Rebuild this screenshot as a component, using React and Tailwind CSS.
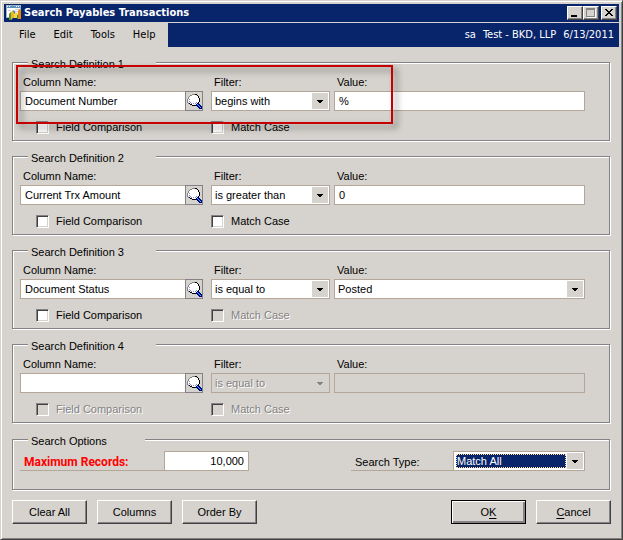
import React from "react";
import clsx from "clsx";

const EMBOSSED = "text-[#848284] [text-shadow:1px_1px_0_#fff]";

function AppIcon() {
  return (
    <svg width="16" height="16" viewBox="0 0 16 16" aria-hidden="true" className="shrink-0">
      <rect x="0" y="0" width="15" height="13" fill="#9db4cc" />
      <rect x="1" y="1" width="13" height="2" fill="#5b8fc0" />
      <path d="M1 1h1v1H1zM3 1h1v1H3zM10 1h1v1h-1zM12 1h1v1h-1z" fill="#fff" />
      <rect x="1" y="3" width="13" height="9" fill="#fff" />
      <path d="M9 4h4v1H9zM9 6h4v1H9zM2 5h3v1H2z" fill="#c3d4e6" />
      <path d="M3 15V9l2-2v8z" fill="#4b9a2f" />
      <path d="M5 15V7l2-2 2 3v2l-2 3z" fill="#f4b61c" />
      <path d="M7 6l1-1 2 4-1 1z" fill="#2c7fd0" />
      <path d="M8 13V9l2-2 2 2v4z" fill="#f7d64c" />
      <path d="M12 14V6l1-2 2 1v9z" fill="#e8851c" />
      <path d="M11 10h1v4h-1z" fill="#3f8f2f" />
    </svg>
  );
}

function Magnifier() {
  return (
    <svg width="16" height="16" viewBox="0 -1 16 16" shapeRendering="crispEdges" aria-hidden="true" className="shrink-0">
      <circle cx="7.5" cy="6" r="5.5" fill="#fff" />
      <path
        d="M6 0h4v1H6zM4 1h2v1H4zM3 2h1v1H3zM2 3h1v2H2zM1 5h1v4H1zM2 9h1v1H2z"
        fill="#848284"
      />
      <path
        d="M9 0h2v1H9zM11 1h1v1h-1zM12 2h1v2h-1zM13 4h1v4h-1zM12 8h1v2h-1zM10 10h2v1h-2zM6 11h4v1H6zM4 10h2v1H4zM3 9h1v1H3z"
        fill="#000"
      />
      <path d="M3 5h1v1H3zM3 7h1v1H3zM4 8h1v1H4zM5 9h1v1H5zM7 9h1v1H7zM9 9h1v1H9zM10 8h1v1h-1z" fill="#8486d6" />
      <path d="M11 9h2v1h1v1h1v1h1v3h-3v-1h-1v-1h-1v-1h-1v-2h1z" fill="#000084" />
      <path d="M11 10h1v1h1v1h1v1h1v1h-1v-1h-1v-1h-1v-1h-1z" fill="#21c7ef" />
    </svg>
  );
}

function Arrow({ disabled }) {
  return (
    <svg width="6" height="3" viewBox="0 0 6 3" shapeRendering="crispEdges" aria-hidden="true">
      <path d="M0 0h6v1H5v1H4v1H2V2H1V1H0z" fill={disabled ? "#848284" : "#000"} />
    </svg>
  );
}

function Combo({ id, value, disabled, focused, className }) {
  return (
    <div
      className={clsx(
        "relative flex h-5 border border-[#b5a69a] p-px",
        disabled ? "bg-[#d6d3ce]" : "bg-white",
        className,
      )}
    >
      <select
        id={id}
        defaultValue={value}
        disabled={disabled}
        className={clsx(
          "min-w-0 flex-1 appearance-none rounded-none opacity-100",
          disabled && EMBOSSED,
          focused
            ? "m-px mr-[17px] bg-[#08246b] pl-px leading-[14px] text-white outline-1 -outline-offset-1 outline-[#ffdb94] outline-dotted"
            : "pr-4 pl-0.5 leading-4 outline-none",
        )}
      >
        <option>{value}</option>
      </select>
      <span
        className={clsx(
          "pointer-events-none absolute top-px right-px bottom-px flex w-4 items-center justify-center",
          !disabled && "bg-[#d6d3ce]",
        )}
      >
        <Arrow disabled={disabled} />
      </span>
    </div>
  );
}

function Tick({ id, label, disabled, className }) {
  return (
    <div className={clsx("flex items-center gap-[7px]", className)}>
      <input
        id={id}
        type="checkbox"
        disabled={disabled}
        className={clsx(
          "size-[13px] shrink-0 appearance-none border border-t-[#848284] border-r-white border-b-white border-l-[#848284] shadow-[inset_1px_1px_0_#424142,inset_-1px_-1px_0_#d6d3ce]",
          disabled ? "bg-[#d6d3ce]" : "bg-white",
        )}
      />
      <label htmlFor={id} className={clsx("leading-[13px]", disabled && EMBOSSED)}>
        {label}
      </label>
    </div>
  );
}

function Group({ title, narrow, className, children }) {
  return (
    <fieldset
      className={clsx(
        "min-w-0 border border-[#848284] px-[7px] shadow-[inset_1px_1px_0_#fff,1px_1px_0_#fff]",
        className,
      )}
    >
      <legend
        className={clsx(
          "ml-2 h-[15px] bg-[#d6d3ce] pt-1 pl-[3px] leading-[11px]",
          narrow ? "w-[117px]" : "w-32",
        )}
      >
        {title}
      </legend>
      {children}
    </fieldset>
  );
}

const DEFINITIONS = [
  { n: 1, column: "Document Number", filter: "begins with", value: "%" },
  { n: 2, column: "Current Trx Amount", filter: "is greater than", value: "0" },
  { n: 3, column: "Document Status", filter: "is equal to", value: "Posted", list: true, noCase: true },
  { n: 4, column: "", filter: "is equal to", value: "", empty: true, noCase: true },
];

function Definition({ n, column, filter, value, list, noCase, empty }) {
  return (
    <Group title={`Search Definition ${n}`} className="h-[86px]">
      <div className="mt-[3px] flex pr-[17px]">
        <div className="w-[183px]">
          <label htmlFor={`column${n}`} className="block h-[18px] pl-[3px] leading-[18px]">
            Column Name:
          </label>
          <div className="flex h-5">
            <input
              id={`column${n}`}
              defaultValue={column}
              className="min-w-0 flex-1 border border-r-0 border-[#b5a69a] bg-white pl-1 outline-none"
            />
            <button
              type="button"
              aria-label="Look up"
              className="flex w-[18px] items-center justify-center border border-[#848284]"
            >
              <Magnifier />
            </button>
          </div>
        </div>
        <div className="ml-2 w-[119px]">
          <label htmlFor={`filter${n}`} className="block h-[18px] pl-[3px] leading-[18px]">
            Filter:
          </label>
          <Combo id={`filter${n}`} value={filter} disabled={empty} />
        </div>
        <div className="ml-1 min-w-0 flex-1">
          <label htmlFor={`value${n}`} className="block h-[18px] pl-[3px] leading-[18px]">
            Value:
          </label>
          {list ? (
            <Combo id={`value${n}`} value={value} />
          ) : (
            <input
              id={`value${n}`}
              defaultValue={value}
              disabled={empty}
              className={clsx(
                "block h-5 w-full border border-[#b5a69a] pl-1 outline-none",
                empty ? "bg-[#d6d3ce]" : "bg-white",
              )}
            />
          )}
        </div>
      </div>
      <div className="mt-[10px] flex pl-4">
        <Tick id={`compare${n}`} label="Field Comparison" disabled={empty} className="w-[175px]" />
        <Tick id={`case${n}`} label="Match Case" disabled={noCase} />
      </div>
    </Group>
  );
}

function PushButton({ primary, children }) {
  return (
    <button
      type={primary ? "submit" : "button"}
      className={clsx(
        "h-6 w-[75px] border",
        primary
          ? "border-black shadow-[inset_1px_1px_0_#fff,inset_-1px_-1px_0_#848284,inset_-2px_-2px_0_#848284]"
          : "border-t-white border-r-[#424142] border-b-[#424142] border-l-white shadow-[inset_-1px_-1px_0_#848284]",
      )}
    >
      {children}
    </button>
  );
}

function CaptionButton({ label, children, className }) {
  return (
    <button
      type="button"
      aria-label={label}
      className={clsx(
        "flex h-[14px] w-4 items-center justify-center border border-t-white border-r-[#424142] border-b-[#424142] border-l-white bg-[#d6d3ce] shadow-[inset_-1px_-1px_0_#848284]",
        className,
      )}
    >
      <svg width="12" height="12" viewBox="0 0 12 12" shapeRendering="crispEdges" aria-hidden="true">
        {children}
      </svg>
    </button>
  );
}

export default function App() {
  return (
    <div className="border border-t-[#d6d3ce] border-r-[#424142] border-b-[#424142] border-l-[#d6d3ce] bg-[#d6d3ce] p-[3px] font-['Liberation_Sans',sans-serif] text-[11px] text-black shadow-[inset_1px_1px_0_#fff,inset_-1px_-1px_0_#848284]">
      <header className="font-['DejaVu_Sans_Condensed','DejaVu_Sans',sans-serif]">
        <div className="flex h-[18px] items-center bg-[#08246b] pr-0.5 pl-0.5 text-white">
          <AppIcon />
          <h1 className="ml-0.5 flex-1 font-bold whitespace-nowrap">Search Payables Transactions</h1>
          <CaptionButton label="Minimize">
            <path d="M2 8h6v2H2z" fill="#000" />
          </CaptionButton>
          <CaptionButton label="Maximize">
            <path d="M1 1h9v9H1zM2 3v6h7V3z" fillRule="evenodd" fill="#848284" />
            <path d="M10 2h1v9H2v-1h8z" fill="#fff" />
          </CaptionButton>
          <CaptionButton label="Close" className="ml-0.5">
            <path
              d="M2 2h2v1h1v1h2V3h1V2h2v1H9v1H8v1H7v1h1v1h1v1h1v1H8V8H7V7H5v1H4v1H2V8h1V7h1V6h1V5H4V4H3V3H2z"
              fill="#000"
            />
          </CaptionButton>
        </div>
        <div className="mt-px flex h-6 items-center bg-[#08246b]">
          <nav className="flex h-full w-[164px] items-center gap-[18px] bg-[#d6d3ce] pl-[15px]">
            <button type="button">File</button>
            <button type="button">Edit</button>
            <button type="button">Tools</button>
            <button type="button">Help</button>
          </nav>
          <p className="flex flex-1 justify-end gap-[7px] pr-[5px] whitespace-nowrap text-white">
            <span>sa</span>
            <span>Test - BKD, LLP</span>
            <span>6/13/2011</span>
          </p>
        </div>
      </header>

      <form className="relative px-2 pt-2 pb-3" onSubmit={(e) => e.preventDefault()}>
        <div className="flex flex-col gap-2 pr-px">
          {DEFINITIONS.map((d) => (
            <Definition key={d.n} {...d} />
          ))}
          <Group title="Search Options" narrow className="mt-px h-[58px]">
            <div className="mt-1 flex h-5 pr-[17px]">
              <label
                htmlFor="maximum"
                className="w-36 border-b border-[#b5a69a] pl-1 font-[Roboto,sans-serif] text-xs leading-[22px] font-bold text-[#ff0000]"
              >
                Maximum Records:
              </label>
              <input
                id="maximum"
                defaultValue="10,000"
                className="w-[85px] border border-[#b5a69a] bg-white pr-1 text-right outline-none"
              />
              <label
                htmlFor="searchType"
                className="ml-auto w-[102px] border-b border-[#b5a69a] pl-1 leading-[22px]"
              >
                Search Type:
              </label>
              <Combo id="searchType" value="Match All" focused className="w-[132px]" />
            </div>
          </Group>
        </div>
        <div className="mt-[10px] flex gap-[10px]">
          <PushButton>Clear All</PushButton>
          <PushButton>Columns</PushButton>
          <PushButton>Order By</PushButton>
          <span className="flex-1" />
          <PushButton primary>
            O<u className="underline-offset-2">K</u>
          </PushButton>
          <PushButton>
            <u className="underline-offset-2">C</u>ancel
          </PushButton>
        </div>

        <div className="pointer-events-none absolute top-[18px] left-3 h-[59px] w-[377px] border-2 border-[#c60000] drop-shadow-[4px_4px_3px_rgba(0,0,0,0.5)]" />
      </form>
    </div>
  );
}
